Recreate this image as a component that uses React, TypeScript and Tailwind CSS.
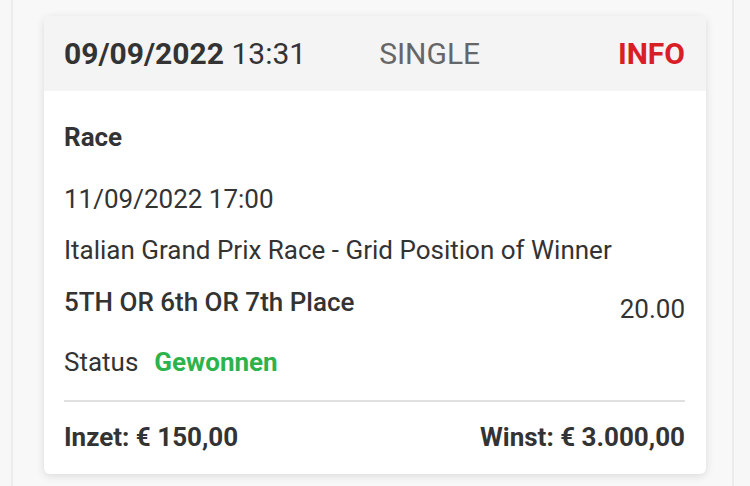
import React from 'react';

export default function App() {
  return (
    <div
      className="min-h-screen bg-[#f7f7f7] text-[#333333]"
      style={{ fontFamily: 'Roboto, "Liberation Sans", sans-serif' }}
    >
      <div className="ml-[11px] w-[723px] min-h-[486px] border-x-2 border-[#ececec] bg-[#f8f8f8] pt-[16px]">
        <div className="ml-[31px] w-[662px] bg-white rounded-[6px] overflow-hidden shadow-[0_2px_8px_rgba(0,0,0,0.12)]">
          {/* Header */}
          <div className="h-[75px] bg-[#f4f4f4] pl-[20px] pr-[21px] flex items-center text-[30px] leading-none">
            <span>
              <span className="font-bold">09/09/2022</span> 13:31
            </span>
            <span className="ml-[73px] text-[#666666]">SINGLE</span>
            <span className="ml-auto font-bold text-[#da1e28]">INFO</span>
          </div>

          {/* Body */}
          <div className="pl-[20px] pr-[21px] pt-[31px] pb-[22px] text-[26px] leading-[30px]">
            <div className="font-bold">Race</div>
            <div className="mt-[32px]">11/09/2022 17:00</div>
            <div className="mt-[21px]">Italian Grand Prix Race - Grid Position of Winner</div>
            <div className="mt-[22px] flex justify-between items-start">
              <span className="font-medium">5TH OR 6th OR 7th Place</span>
              <span className="pt-[7px]">20.00</span>
            </div>
            <div className="mt-[23px] flex items-center">
              <span>Status</span>
              <span className="ml-[16px] font-bold text-[#2db34c]">Gewonnen</span>
            </div>
            <div className="mt-[23px] h-[2px] bg-[#e0e0e0]" />
            <div className="mt-[20px] flex justify-between font-bold">
              <span>Inzet: € 150,00</span>
              <span>Winst: € 3.000,00</span>
            </div>
          </div>
        </div>
      </div>
    </div>
  );
}
